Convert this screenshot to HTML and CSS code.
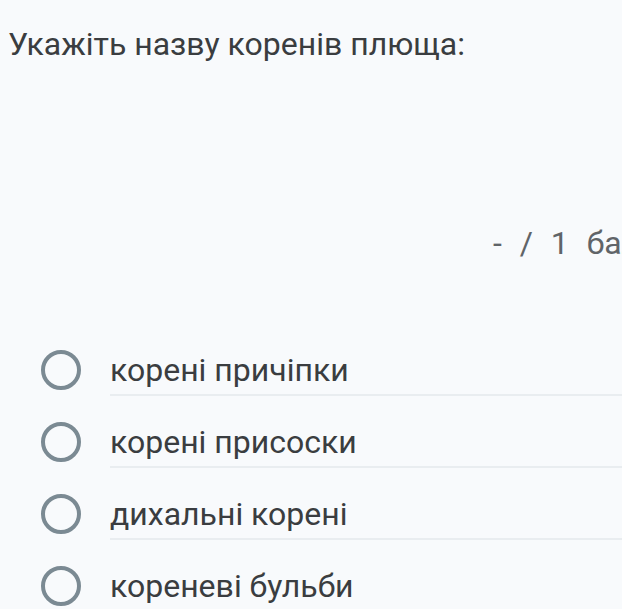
FILE: index.html
```html
<!DOCTYPE html>
<html lang="uk">
<head>
<meta charset="utf-8">
<link rel="stylesheet" href="styles.css">
</head>
<body>
<div class="page">
  <h1 class="question">Укажіть назву коренів плюща:</h1>
  <div class="score">-&nbsp; /&nbsp; 1&nbsp; бал</div>
  <ul class="options">
    <li class="option"><span class="radio"></span><span class="label">корені причіпки</span></li>
    <li class="option"><span class="radio"></span><span class="label">корені присоски</span></li>
    <li class="option"><span class="radio"></span><span class="label">дихальні корені</span></li>
    <li class="option option-last"><span class="radio"></span><span class="label">кореневі бульби</span></li>
  </ul>
</div>
</body>
</html>
```
FILE: styles.css
```css
html, body {
  margin: 0;
  padding: 0;
  background: #f8fafc;
}
body {
  font-family: Roboto, "Noto Sans", sans-serif;
  color: #3a3d40;
  width: 622px;
  height: 609px;
  overflow: hidden;
}
.page {
  padding-top: 24px;
}
.question {
  margin: 0 0 0 8px;
  font-size: 32px;
  font-weight: 400;
  line-height: 40px;
  white-space: nowrap;
}
.score {
  margin-top: 159px;
  padding-left: 493px;
  font-size: 32px;
  line-height: 40px;
  color: #606468;
  white-space: nowrap;
  word-spacing: 1px;
}
.options {
  list-style: none;
  margin: 71px 0 0 0;
  padding: 0;
}
.option {
  display: flex;
  align-items: center;
  height: 72px;
}
.radio {
  box-sizing: border-box;
  width: 40px;
  height: 40px;
  border: 4px solid #7b8a93;
  border-radius: 50%;
  margin-left: 41px;
  margin-right: 29px;
  flex: none;
}
.label {
  flex: 1;
  font-size: 32px;
  white-space: nowrap;
  border-bottom: 2px solid #e9edf0;
  height: 48px;
  line-height: 48px;
  margin-top: 2px;
}
.option-last {
  height: 56px;
  align-items: flex-start;
}
.option-last .radio {
  margin-top: 16px;
}
.option-last .label {
  margin-top: 12px;
  border-bottom: none;
}
```
